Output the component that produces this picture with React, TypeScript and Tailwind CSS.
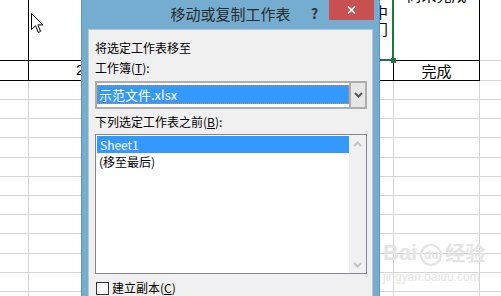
import React from "react";

const rowClasses = [
  "h-[19px]",
  "h-[19px]",
  "h-[19px]",
  "h-[20px]",
  "h-[19px]",
  "h-[19px]",
  "h-[19px]",
  "h-[19px]",
  "h-[20px]",
  "h-[19px]",
  "h-[19px]",
  "h-[19px]",
];

const Chevron = ({ up, color }: { up?: boolean; color: string }) => (
  <svg width="9" height="6" viewBox="0 0 9 6">
    <polyline
      points={up ? "1,5 4.5,1.5 8,5" : "1,1 4.5,4.5 8,1"}
      fill="none"
      stroke={color}
      strokeWidth="2"
    />
  </svg>
);

const Sheet = () => (
  <div className="flex flex-col font-['Noto_Sans_CJK_SC',sans-serif] text-black">
    {/* row 1 */}
    <div className="flex h-[61px]">
      <div className="w-[29px] border-r border-b border-black" />
      <div className="w-[365px] border-r border-b border-black flex flex-col items-end justify-start pr-[5px] pt-[3px] text-[15px] leading-[17px]">
        <span>中</span>
        <span>门</span>
      </div>
      <div className="w-[86px] border-r border-b border-black flex justify-center">
        <span className="-mt-[13px] text-[15px] leading-[16px]">尚未完成</span>
      </div>
      <div className="flex-1 border-b border-[#d4d4d4]" />
    </div>
    {/* row 2 */}
    <div className="flex h-[20px]">
      <div className="w-[29px] border-r border-b border-black" />
      <div className="w-[365px] border-r border-b border-black flex items-center pl-[47px] text-[15px] font-['Liberation_Sans',sans-serif]">
        2017
      </div>
      <div className="w-[86px] border-r border-b border-black flex items-center justify-center text-[15px] leading-[18px]">
        完成
      </div>
      <div className="flex-1 border-b border-[#d4d4d4]" />
    </div>
    {rowClasses.map((h, i) => (
      <div key={i} className={`flex ${h}`}>
        <div className="w-[29px] border-r border-b border-[#d4d4d4]" />
        <div className="w-[365px] border-r border-b border-[#d4d4d4]" />
        <div className="w-[86px] border-r border-b border-[#d4d4d4]" />
        <div className="flex-1 border-b border-[#d4d4d4]" />
      </div>
    ))}
  </div>
);

const Dialog = () => (
  <div className="absolute left-[81px] top-0 w-[299px] h-[310px] bg-[#74add0] border-x border-[#5f98bb] flex flex-col font-['Noto_Sans_CJK_SC',sans-serif]">
    <div className="relative h-[29px] flex items-center justify-center text-[15px] text-[#2b2b2b]">
      移动或复制工作表
      <span className="absolute left-[229px] top-[3px] text-[14px] font-bold text-[#333]">?</span>
      <div className="absolute right-[5px] top-0 w-[45px] h-[20px] bg-[#c75050] flex items-center justify-center">
        <svg width="9" height="8" viewBox="0 0 9 8">
          <path d="M1 0.5 L8 7.5 M8 0.5 L1 7.5" stroke="#fff" strokeWidth="1.6" />
        </svg>
      </div>
    </div>
    <div className="flex-1 mx-[6px] bg-[#f0f0f0] border border-[#b6c6d2] pl-[6px] pr-[5px] pt-[10px] text-[12px] leading-[16px] text-black">
      <div>将选定工作表移至</div>
      <div className="mt-[4px]">
        工作簿(<span className="underline">T</span>):
      </div>
      <div className="mt-[5px] h-[28px] border-2 border-[#adadad] bg-white flex">
        <div className="flex-1 pt-[2px]">
          <div className="h-[19px] bg-[#3399ff] border border-dotted border-[#d98c3a] text-white pl-[1px] text-[13px] leading-[17px]">
            示范文件.xlsx
          </div>
        </div>
        <div className="w-[16px] border-l-2 border-[#adadad] bg-[#e6e6e6] flex items-center justify-center">
          <Chevron color="#555" />
        </div>
      </div>
      <div className="mt-[5px]">
        下列选定工作表之前(<span className="underline">B</span>):
      </div>
      <div className="mt-[4px] h-[140px] border border-[#828790] bg-white flex">
        <div className="flex-1 pl-[1px] pt-[1px]">
          <div className="h-[17px] bg-[#3399ff] text-white pl-[3px] leading-[17px]">Sheet1</div>
          <div className="h-[17px] pl-[2px] leading-[17px]">(移至最后)</div>
        </div>
        <div className="w-[17px] bg-[#f0f0f0] flex flex-col justify-between">
          <div className="h-[17px] flex items-center justify-center">
            <Chevron up color="#c2c2c2" />
          </div>
          <div className="h-[17px] flex items-center justify-center">
            <Chevron color="#c2c2c2" />
          </div>
        </div>
      </div>
      <div className="mt-[6px] flex items-start">
        <div className="ml-[1px] mt-[2px] w-[13px] h-[13px] border border-[#333] bg-white" />
        <span className="ml-[3px]">
          建立副本(<span className="underline">C</span>)
        </span>
      </div>
    </div>
  </div>
);

export default function App() {
  return (
    <div className="relative w-[501px] h-[296px] overflow-hidden bg-white">
      <Sheet />
      {/* selected cell (left edge hidden under the dialog) */}
      <div className="absolute left-[200px] -top-[3px] w-[194px] h-[64px] border-2 border-[#217346]" />
      <div className="absolute left-[391px] top-[58px] w-[5px] h-[5px] bg-[#217346]" />
      {/* mouse cursor */}
      <svg className="absolute left-[31px] top-[13px]" width="13" height="21" viewBox="0 0 13 21">
        <path
          d="M0.5 0.5 L0.5 16.5 L4.5 12.7 L7.3 19.5 L9.6 18.5 L6.9 11.9 L12 11.9 Z"
          fill="#fff"
          stroke="#000"
          strokeWidth="1"
        />
      </svg>
      <Dialog />
      {/* watermark */}
      <div className="absolute left-[383px] top-[240px] flex flex-col text-[#e4e4e4] font-['Liberation_Sans',sans-serif]">
        <div className="flex items-end text-[22px] font-bold leading-[26px]">
          <span>Bai</span>
          <span className="ml-[3px] w-[22px] h-[22px] rounded-full border-2 border-[#e4e4e4] text-[12px] leading-[18px] text-center">du</span>
          <span className="ml-[3px] text-[20px] font-['Noto_Sans_CJK_SC',sans-serif]">经验</span>
        </div>
        <div className="text-[12px] leading-[14px] mt-[4px]">jingyan.baidu.com</div>
      </div>
    </div>
  );
}
